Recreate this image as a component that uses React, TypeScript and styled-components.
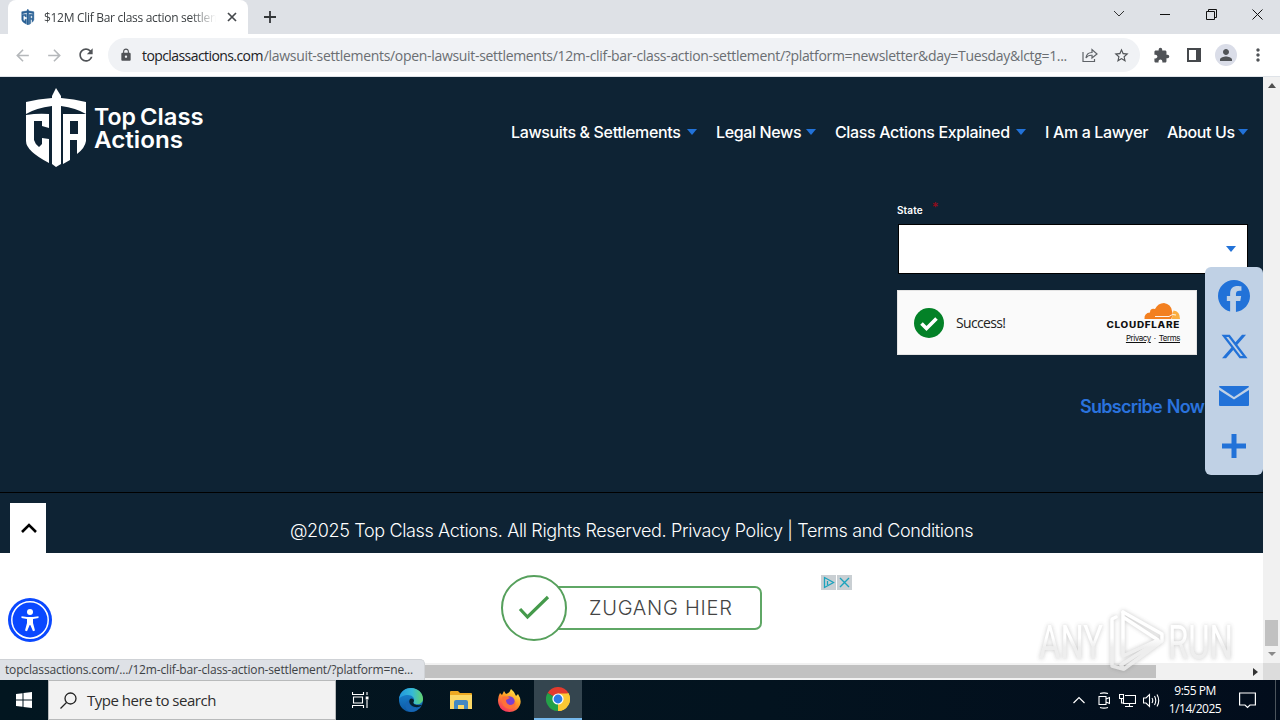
import React from 'react';
import styled, { createGlobalStyle } from 'styled-components';
import { MdLock, MdStarBorder, MdExtension, MdPerson, MdRefresh, MdArrowBack, MdArrowForward, MdMoreVert } from 'react-icons/md';
import { FaFacebook, FaXTwitter } from 'react-icons/fa6';

const ui = `"Open Sans", "Noto Sans", sans-serif`;
const brand = `Inter, Lato, sans-serif`;
const navy = '#0e2334';
const blue = '#2272d8';

const Global = createGlobalStyle`
  * { box-sizing: border-box; }
  html, body { margin: 0; padding: 0; overflow: hidden; }
  body { font-family: ${ui}; }
  svg { display: block; flex: none; }
`;

const Screen = styled.div`
  width: 1280px;
  height: 720px;
  display: flex;
  flex-direction: column;
  overflow: hidden;
  position: relative;
  background: #fff;
`;

const TabStrip = styled.div`
  height: 34px;
  flex: none;
  background: #dee1e6;
  display: flex;
  padding-left: 8px;
`;
const Tab = styled.div`
  width: 240px;
  height: 34px;
  background: #fff;
  border-radius: 8px 8px 0 0;
  display: flex;
  align-items: center;
  padding: 0 4px 0 13px;
`;
const TabTitle = styled.div`
  margin-left: 9px;
  width: 172px;
  margin-right: 4px;
  white-space: nowrap;
  overflow: hidden;
  font-size: 12px;
  letter-spacing: -0.3px;
  color: #3c4043;
  mask-image: linear-gradient(90deg, #000 85%, transparent);
`;
const NewTab = styled.div`
  width: 44px;
  display: flex;
  align-items: center;
  justify-content: center;
`;
const WindowButtons = styled.div`
  margin-left: auto;
  width: 184px;
  height: 28px;
  display: grid;
  grid-template-columns: repeat(4, 46px);
  place-items: center;
`;

const Toolbar = styled.div`
  height: 43px;
  flex: none;
  display: flex;
  align-items: center;
  border-bottom: 1px solid #dfe3e8;
  padding-left: 11px;
  color: #505357;
`;
const ToolIcon = styled.div<{ $w: number; $c?: string }>`
  width: ${p => p.$w}px;
  display: flex;
  justify-content: center;
  color: ${p => p.$c || 'inherit'};
`;
const Omnibox = styled.div`
  width: 1032px;
  height: 34px;
  border-radius: 17px;
  background: #f0f2f5;
  display: flex;
  align-items: center;
  padding-left: 11px;
`;
const Url = styled.div`
  margin-left: 9px;
  flex: 0 0 936px;
  white-space: nowrap;
  font-size: 14px;
  letter-spacing: -0.315px;
  color: #6a6e72;
  b { font-weight: 400; color: #202124; letter-spacing: -0.58px; margin-right: 1px; }
`;
const Avatar = styled.div`
  width: 22px;
  height: 22px;
  border-radius: 50%;
  background: #dadde8;
  display: flex;
  align-items: center;
  justify-content: center;
`;

const Viewport = styled.div`
  height: 603px;
  flex: none;
  display: grid;
  grid-template-columns: 1263px 17px;
  grid-template-rows: 586px 17px;
`;
const Page = styled.div`
  display: flex;
  flex-direction: column;
  overflow: hidden;
  background: #fff;
`;
const Header = styled.header`
  height: 103px;
  flex: none;
  background: ${navy};
  display: flex;
  justify-content: space-between;
  padding: 11px 15px 0 25px;
`;
const Nav = styled.nav`
  display: flex;
  gap: 19px;
  padding-top: 34px;
  height: 54px;
`;
const NavItem = styled.div<{ $w: number }>`
  width: ${p => p.$w}px;
  display: flex;
  align-items: center;
  justify-content: space-between;
  font: 500 16px/20px ${brand};
  letter-spacing: -0.36px;
  color: #fff;
  white-space: nowrap;
`;
const Caret = styled.span`
  flex: none;
  border: 5px solid transparent;
  border-top: 6px solid ${blue};
  border-bottom: 0;
`;
const Body = styled.main`
  height: 312px;
  flex: none;
  background: ${navy};
  display: flex;
  flex-direction: column;
  align-items: flex-start;
  padding: 20px 0 0 897px;
`;
const FieldLabel = styled.label`
  height: 24px;
  display: flex;
  gap: 9px;
  font: 600 10px/20px ${brand};
  color: #fff;
  letter-spacing: 0.1px;
`;
const Required = styled.span`
  color: #8e0d1c;
  font-size: 13px;
  line-height: 14px;
`;
const Select = styled.div`
  width: 350px;
  height: 50px;
  margin-left: 1px;
  background: #fff;
  border: 1px solid #000;
  display: flex;
  align-items: center;
  justify-content: flex-end;
  padding-right: 11px;
`;
const Turnstile = styled.div`
  width: 300px;
  height: 65px;
  margin-top: 16px;
  background: #fafafa;
  border: 1px solid #e4e4e4;
  display: flex;
  align-items: center;
  padding: 0 16px;
`;
const Success = styled.div`
  margin-left: 12px;
  font-size: 14px;
  letter-spacing: -0.65px;
  color: #232323;
`;
const CfBrand = styled.div`
  margin-left: auto;
  display: flex;
  flex-direction: column;
  align-items: flex-end;
`;
const CfLinks = styled.div`
  margin-top: 4px;
  font: 8px/10px ${brand};
  letter-spacing: -0.45px;
  color: #111;
  display: flex;
  gap: 3px;
  u { text-underline-offset: 1px; }
`;
const Subscribe = styled.div`
  margin: 41px 0 0 183px;
  font: 600 18px/22px ${brand};
  letter-spacing: -0.7px;
  word-spacing: 1px;
  color: #2a72dc;
`;
const Footer = styled.footer`
  height: 61px;
  flex: none;
  background: ${navy};
  border-top: 1px solid #000;
  padding: 27px 0 0 290px;
  font: 300 18px/22px ${brand};
  color: #fff;
  white-space: nowrap;
`;
const FooterText = styled.div`
  letter-spacing: -0.362px;
`;
const Ad = styled.div`
  height: 110px;
  display: flex;
  align-items: flex-start;
  padding: 22px 0 0 501px;
`;
const AdCta = styled.div`
  display: flex;
  align-items: center;
  width: 261px;
  height: 66px;
`;
const AdCircle = styled.div`
  width: 66px;
  height: 66px;
  flex: none;
  border-radius: 50%;
  border: 2px solid #56a05c;
  background: #fff;
  z-index: 1;
  display: flex;
  align-items: center;
  justify-content: center;
`;
const AdBox = styled.div`
  width: 204px;
  height: 44px;
  margin-left: -9px;
  border: 2px solid #5fa765;
  border-radius: 0 7px 7px 0;
  display: flex;
  align-items: center;
  padding-left: 29px;
  font: 300 20px/24px ${brand};
  letter-spacing: 0.75px;
  color: #444;
  white-space: nowrap;
`;
const AdChoices = styled.div`
  margin-left: 59px;
  display: flex;
  gap: 1px;
  svg { background: #c9cfd3; }
`;

const VBar = styled.div`
  background: #f1f1f1;
  display: flex;
  flex-direction: column;
  align-items: center;
  padding: 6px 0 7px;
`;
const VThumb = styled.div`
  width: 13px;
  height: 26px;
  margin: auto 0 6px;
  background: #c1c1c1;
`;
const Arrow = styled.span<{ $dir: 'up' | 'down' | 'right'; $c: string }>`
  width: 0;
  height: 0;
  border: 4px solid transparent;
  ${p => p.$dir === 'up' && `border-top: 0; border-bottom: 5px solid ${p.$c};`}
  ${p => p.$dir === 'down' && `border-bottom: 0; border-top: 4px solid ${p.$c};`}
  ${p => p.$dir === 'right' && `border-right: 0; border-left: 5px solid ${p.$c};`}
`;
const HBar = styled.div`
  background: #f1f1f1;
  display: flex;
  align-items: center;
  justify-content: space-between;
  padding-right: 5px;
`;
const HThumb = styled.div`
  width: 1156px;
  height: 13px;
  background: #c1c1c1;
`;
const Corner = styled.div`
  background: #dcdcdc;
`;

const ShareBar = styled.div`
  position: absolute;
  left: 1205px;
  top: 267px;
  width: 58px;
  height: 208px;
  border-radius: 6px;
  background: #c0d1e5;
  color: ${blue};
  display: grid;
  grid-template-rows: repeat(4, 50px);
  place-items: center;
  padding-top: 4px;
`;
const BackToTop = styled.div`
  position: absolute;
  left: 10px;
  top: 503px;
  width: 36px;
  height: 50px;
  background: #fff;
  display: flex;
  align-items: center;
  justify-content: center;
  padding-left: 2px;
`;
const Accessibility = styled.div`
  position: absolute;
  left: 8px;
  top: 598px;
`;
const StatusBubble = styled.div`
  position: absolute;
  left: 0;
  top: 659px;
  width: 425px;
  height: 21px;
  background: #dee1e6;
  border: 1px solid #cfd2d6;
  border-left: 0;
  border-bottom: 0;
  border-radius: 0 5px 0 0;
  padding-left: 5px;
  font-size: 12px;
  line-height: 20px;
  letter-spacing: -0.16px;
  color: #3d4145;
  white-space: nowrap;
`;
const Watermark = styled.div`
  position: absolute;
  left: 1030px;
  top: 600px;
`;

const Taskbar = styled.div`
  height: 40px;
  flex: none;
  background: linear-gradient(90deg, #021620 0%, #03131f 60%, #020d1c 100%);
  display: flex;
  color: #fff;
`;
const TaskCell = styled.div<{ $w: number; $active?: boolean }>`
  width: ${p => p.$w}px;
  height: 40px;
  display: flex;
  align-items: center;
  justify-content: center;
  background: ${p => (p.$active ? '#34454f' : 'transparent')};
  border-bottom: ${p => (p.$active ? '2px solid #76b9ed' : '0')};
`;
const Search = styled.div`
  width: 288px;
  height: 40px;
  background: #f2f2f2;
  border: 1px solid #b8babb;
  display: flex;
  align-items: center;
  padding-left: 11px;
  gap: 10px;
  font-size: 15px;
  letter-spacing: -0.48px;
  color: #2e2e2e;
`;
const Tray = styled.div`
  margin-left: auto;
  display: flex;
  align-items: center;
`;
const Clock = styled.div`
  width: 64px;
  text-align: center;
  font-size: 12px;
  line-height: 18px;
  letter-spacing: -0.5px;
  padding-bottom: 1px;
`;
const ShowDesktop = styled.div`
  width: 5px;
  height: 40px;
  margin-left: 8px;
  border-left: 1px solid #4b545c;
`;

const shieldPath =
  'M30 0L35 8V10Q48 11 60 14V26Q50 20 35 18V76L30 79L26 76V18Q10 20 0 26V14Q12 11 26 10V8Z M0 27Q12 25 23 26V40L16 38V33H8V52Q9 56 13 59L16 56V50L23 51V75Q0 63 0 53Z M37 26H60V53Q59 60 51 66V52H44V72L37 76Z M44 33V46H52V33Z';

function Logo() {
  return (
    <svg width="180" height="80" viewBox="0 0 180 80">
      <g transform="translate(1 0)">
        <path d={shieldPath} fill="#fff" fillRule="evenodd" />
      </g>
      <g fill="#fff" fontFamily={brand} fontWeight="600" fontSize="23.500">
        <text x="69" y="37" textLength="42" lengthAdjust="spacingAndGlyphs">Top</text>
        <text x="115" y="37" textLength="63.500" lengthAdjust="spacingAndGlyphs">Class</text>
        <text x="69" y="60" textLength="89" lengthAdjust="spacingAndGlyphs">Actions</text>
      </g>
    </svg>
  );
}

function Favicon() {
  return (
    <svg width="14" height="16" viewBox="0 0 62 79">
      <path d={shieldPath} fill="#2b6195" stroke="#2b6195" strokeWidth="2" fillRule="evenodd" />
    </svg>
  );
}

function CloudflareMark() {
  return (
    <svg width="75" height="27" viewBox="0 0 75 27">
      <path d="M39.500 17Q39 11 45 10.500Q45 6 50 7Q53 1 59 1Q66 2 67 9Q68.500 13 66 17Z" fill="#f38020" />
      <path d="M66.500 17Q67.500 15 67.500 12L68.500 8.500Q75 9 75 17Z" fill="#faae40" />
      <path d="M50 14.500H64L67.500 12.500L71 13" stroke="#fff" strokeWidth=".9" fill="none" />
      <text x="1.500" y="25.500" fontFamily={brand} fontWeight="800" fontSize="8.600" textLength="73.500" lengthAdjust="spacingAndGlyphs" fill="#111" letterSpacing=".6">CLOUDFLARE</text>
    </svg>
  );
}

function AnyRun() {
  return (
    <svg width="210" height="76" viewBox="0 0 210 76">
      <defs>
        <linearGradient id="wm" x1="0" x2="0" y1="0" y2="76" gradientUnits="userSpaceOnUse">
          <stop offset=".5" stopColor="#fff" />
          <stop offset=".62" stopColor="#ececec" />
        </linearGradient>
      </defs>
      <g style={{ filter: 'drop-shadow(0 0 2px rgba(110,110,110,.45))' }} opacity=".85">
        <g fill="url(#wm)" fontFamily="Roboto, sans-serif" fontSize="49" fontWeight="400">
          <text x="9" y="58.500" textLength="64" lengthAdjust="spacingAndGlyphs">ANY</text>
          <text x="138" y="58.500" textLength="65" lengthAdjust="spacingAndGlyphs">RUN</text>
        </g>
        <g fill="none" stroke="url(#wm)" strokeWidth="3.500" strokeLinejoin="round" strokeLinecap="round">
          <path d="M93 12V56L128 40L93 17" />
          <path d="M93 12L132 34V41L94 69L91 65L128 41" />
          <path d="M86 17L82 19V66L93 69" />
        </g>
      </g>
    </svg>
  );
}

function Edge() {
  return (
    <svg width="26" height="26" viewBox="0 0 26 26">
      <defs>
        <linearGradient id="eg" x1="0" x2="1"><stop offset="0" stopColor="#2196dc" /><stop offset=".55" stopColor="#35b9d8" /><stop offset="1" stopColor="#64d46b" /></linearGradient>
        <linearGradient id="eb" x1="0" x2="0" y1="0" y2="1"><stop offset="0" stopColor="#1c8ad6" /><stop offset="1" stopColor="#0c59a4" /></linearGradient>
      </defs>
      <circle cx="13" cy="13" r="12" fill="url(#eb)" />
      <path d="M1 12C2 4 8 1 13 1C20 1 25 6 25 12C25 16 21 18 17 17C15 16.500 15 15.500 16 14C17 11 14 8 10 8C6 8 2 10 1 12Z" fill="url(#eg)" />
      <path d="M11 13C10 20 17 23 23 19C20 24 14 26 10 24C6 20 7 15 11 13Z" fill="#1666b4" />
      <path d="M12 12C10 15 12 19 17 20C20 20.500 23 19.500 25 17.500C21 19 13 18 16 14C16 12 14 10.500 12 12Z" fill="#06202f" />
    </svg>
  );
}

function Explorer() {
  return (
    <svg width="24" height="22" viewBox="0 0 24 22">
      <path d="M1 3Q1 2 2 2H9L11 4H22Q23 4 23 5V19H1Z" fill="#eda922" />
      <path d="M1 6H23V20H1Z" fill="#fbd866" />
      <path d="M5 20V13Q5 11 7 11H17Q19 11 19 13V20H15V16H9V20Z" fill="#4388c2" />
    </svg>
  );
}

function Firefox() {
  return (
    <svg width="25" height="25" viewBox="0 0 25 25">
      <defs>
        <linearGradient id="ff" x1=".8" x2=".2" y1="0" y2="1"><stop offset="0" stopColor="#fff04a" /><stop offset=".45" stopColor="#ff9a25" /><stop offset="1" stopColor="#f52866" /></linearGradient>
      </defs>
      <path d="M3 5L5 7L7 3L9 6Q12 6 14 1Q18 4 19 8L21 6Q25 12 23 17Q20 24 12.500 24Q4 24 1.500 16Q0 10 3 5Z" fill="url(#ff)" />
      <circle cx="12.500" cy="13.500" r="5.200" fill="#7b3fd1" />
      <path d="M5 9Q9 7 13 10Q11 11 9 12Q9 16 13 17Q17 17 18 13Q20 20 13 21Q6 20 5 14Z" fill="#ff7139" />
    </svg>
  );
}

function Chrome() {
  return (
    <svg width="24" height="24" viewBox="0 0 24 24">
      <path d="M12 12L1.600 6A12 12 0 0 1 22.400 6Z" fill="#e33b2e" />
      <path d="M12 12L22.400 6A12 12 0 0 1 12 24Z" fill="#fcc934" />
      <path d="M12 12L12 24A12 12 0 0 1 1.600 6Z" fill="#24a148" />
      <path d="M12 6.500H22.600A12 12 0 0 1 12 24L16.800 14.700Z" fill="#fcc934" />
      <circle cx="12" cy="12" r="5.600" fill="#fff" />
      <circle cx="12" cy="12" r="4.400" fill="#2c7be5" />
    </svg>
  );
}

const navItems = [
  { label: 'Lawsuits & Settlements', w: 186, caret: true },
  { label: 'Legal News', w: 100, caret: true },
  { label: 'Class Actions Explained', w: 191, caret: true },
  { label: 'I Am a Lawyer', w: 103, caret: false },
  { label: 'About Us', w: 81, caret: true },
];

export default function App() {
  return (
    <Screen>
      <Global />
      <TabStrip>
        <Tab>
          <Favicon />
          <TabTitle>$12M Clif Bar class action settlement</TabTitle>
          <svg width="24" height="12" viewBox="0 0 24 12" stroke="#45484c" strokeWidth="1.7"><path d="M8 2L16 10M16 2L8 10" /></svg>
        </Tab>
        <NewTab>
          <svg width="12" height="12" viewBox="0 0 12 12" stroke="#333639" strokeWidth="1.8"><path d="M6 0V12M0 6H12" /></svg>
        </NewTab>
        <WindowButtons>
          <svg width="12" height="8" viewBox="0 0 12 8" fill="none" stroke="#333"><path d="M1 1L6 6L11 1" /></svg>
          <svg width="10" height="10" viewBox="0 0 10 10" stroke="#111"><path d="M0 5.500H10" /></svg>
          <svg width="11" height="11" viewBox="0 0 11 11" fill="none" stroke="#111"><path d="M.5 2.500H8.500V10.500H.5ZM2.500 2.500V.5H10.500V8.500H8.500" /></svg>
          <svg width="11" height="11" viewBox="0 0 11 11" stroke="#111"><path d="M.5.5L10.500 10.500M10.500.5L.5 10.500" /></svg>
        </WindowButtons>
      </TabStrip>
      <Toolbar>
        <ToolIcon $w={22} $c="#b5b8bb"><MdArrowBack size={19} /></ToolIcon>
        <ToolIcon $w={42} $c="#b5b8bb"><MdArrowForward size={19} /></ToolIcon>
        <ToolIcon $w={22}><MdRefresh size={20} /></ToolIcon>
        <ToolIcon $w={11} />
        <Omnibox>
          <MdLock size={14} />
          <Url><b>topclassactions.com</b>/lawsuit-settlements/open-lawsuit-settlements/12m-clif-bar-class-action-settlement/?platform=newsletter&amp;day=Tuesday&amp;lctg=1...</Url>
          <ToolIcon $w={24}>
            <svg width="16" height="15" viewBox="0 0 16 15" fill="none" stroke="#5f6368" strokeWidth="1.2"><path d="M1 4V13.500H12.500V11M4 10Q4.500 4.500 10 4.500V1.500L15 6L10 10V7.300Q6 7 4 10Z" /></svg>
          </ToolIcon>
          <ToolIcon $w={38}><MdStarBorder size={17} /></ToolIcon>
        </Omnibox>
        <ToolIcon $w={43}><MdExtension size={17} /></ToolIcon>
        <ToolIcon $w={22}>
          <svg width="14" height="14" viewBox="0 0 14 14"><path d="M0 0H14V14H0ZM2 2V12H9V2Z" fill="#45484c" fillRule="evenodd" /></svg>
        </ToolIcon>
        <ToolIcon $w={42}><Avatar><MdPerson size={18} /></Avatar></ToolIcon>
        <ToolIcon $w={22}><MdMoreVert size={20} /></ToolIcon>
      </Toolbar>
      <Viewport>
        <Page>
          <Header>
            <Logo />
            <Nav>
              {navItems.map(n => (
                <NavItem key={n.label} $w={n.w}>{n.label}{n.caret && <Caret />}</NavItem>
              ))}
            </Nav>
          </Header>
          <Body>
            <FieldLabel>State<Required>*</Required></FieldLabel>
            <Select><Caret /></Select>
            <Turnstile>
              <svg width="30" height="30" viewBox="0 0 30 30"><circle cx="15" cy="15" r="15" fill="#038127" /><path d="M7.500 15.500L12.500 20.500L22.500 10.500" fill="none" stroke="#fff" strokeWidth="3.600" /></svg>
              <Success>Success!</Success>
              <CfBrand>
                <CloudflareMark />
                <CfLinks><u>Privacy</u><span>·</span><u>Terms</u></CfLinks>
              </CfBrand>
            </Turnstile>
            <Subscribe>Subscribe Now</Subscribe>
          </Body>
          <Footer>
            <FooterText>@2025 Top Class Actions. All Rights Reserved. Privacy Policy | Terms and Conditions</FooterText>
          </Footer>
          <Ad>
            <AdCta>
              <AdCircle>
                <svg width="32" height="26" viewBox="0 0 32 26" fill="none" stroke="#459a4b" strokeWidth="3.200"><path d="M2 14L9.500 22L30 2" /></svg>
              </AdCircle>
              <AdBox>ZUGANG HIER</AdBox>
            </AdCta>
            <AdChoices>
              <svg width="15" height="15" viewBox="0 0 15 15" fill="none" stroke="#1ba3bd" strokeWidth="1.300"><path d="M3.500 2.500V12.500L12.500 7.500ZM6.500 6V10" /></svg>
              <svg width="15" height="15" viewBox="0 0 15 15" stroke="#1ba3bd" strokeWidth="1.400"><path d="M3 3L12 12M12 3L3 12" /></svg>
            </AdChoices>
          </Ad>
        </Page>
        <VBar>
          <Arrow $dir="up" $c="#505050" />
          <VThumb />
          <Arrow $dir="down" $c="#8a8a8a" />
        </VBar>
        <HBar><HThumb /><Arrow $dir="right" $c="#333" /></HBar>
        <Corner />
      </Viewport>
      <Taskbar>
        <TaskCell $w={48}>
          <svg width="16" height="16" viewBox="0 0 16 16" fill="#fff"><path d="M0 2L6.500 1.200V7.500H0ZM7.500 1L16 0V7.500H7.500ZM0 8.500H6.500V14.800L0 14ZM7.500 8.500H16V16L7.500 15Z" /></svg>
        </TaskCell>
        <Search>
          <svg width="17" height="17" viewBox="0 0 17 17" fill="none" stroke="#222" strokeWidth="1.300"><circle cx="10.500" cy="6.500" r="5.500" /><path d="M6.500 10.500L.5 16.500" /></svg>
          Type here to search
        </Search>
        <TaskCell $w={48}>
          <svg width="17" height="16" viewBox="0 0 17 16" fill="none" stroke="#fff" strokeWidth="1.100"><path d="M.5 0V2.500H11.500V0M1.500 5H10.500V11H1.500ZM.5 16V13.500H11.500V16M15 0V3M15 8V16" /><path d="M13.700 4.500H16.500V7.500H13.700Z" fill="#fff" stroke="none" /></svg>
        </TaskCell>
        <TaskCell $w={54}><Edge /></TaskCell>
        <TaskCell $w={46}><Explorer /></TaskCell>
        <TaskCell $w={50}><Firefox /></TaskCell>
        <TaskCell $w={48} $active><Chrome /></TaskCell>
        <Tray>
          <TaskCell $w={26}><svg width="12" height="8" viewBox="0 0 12 8" fill="none" stroke="#fff" strokeWidth="1.200"><path d="M.5 7L6 1.500L11.500 7" /></svg></TaskCell>
          <TaskCell $w={23}><svg width="12" height="17" viewBox="0 0 12 17" fill="none" stroke="#fff" strokeWidth="1.100"><path d="M1 4.500H8V12.500H1ZM8 7L11.500 5.500V11.500L8 10M2 1.500Q6 .2 10 1.500M2 15.500Q6 16.800 10 15.500" /></svg></TaskCell>
          <TaskCell $w={24}><svg width="17" height="15" viewBox="0 0 17 15" fill="none" stroke="#fff" strokeWidth="1.100"><path d="M6 2.500H16.500V10.500H4.500V6M10.500 10.500V13.500M6 13.500H14M.5 1.500H4.500V5.500H.5ZM2.500 5.500V10H4.500" /></svg></TaskCell>
          <TaskCell $w={24}><svg width="17" height="15" viewBox="0 0 17 15" fill="none" stroke="#fff" strokeWidth="1.100"><path d="M.5 5H3L6.500 1.500V13.500L3 10H.5ZM9 5Q10.500 7.500 9 10M11.500 3Q14 7.500 11.500 12M14 1.500Q17.500 7.500 14 13.500" /></svg></TaskCell>
          <Clock>9:55 PM<br />1/14/2025</Clock>
          <TaskCell $w={40}><svg width="17" height="17" viewBox="0 0 17 17" fill="none" stroke="#fff" strokeWidth="1.200"><path d="M.6 1H16.400V13H11L8.500 15.500L6 13H.6Z" /></svg></TaskCell>
          <ShowDesktop />
        </Tray>
      </Taskbar>

      <ShareBar>
        <FaFacebook size={32} />
        <FaXTwitter size={29} />
        <svg width="30" height="20" viewBox="0 0 30 20" fill={blue}><path d="M0 1Q0 0 1 0H29Q30 0 30 1L15 11ZM0 4L15 13.500L30 4V19Q30 20 29 20H1Q0 20 0 19Z" /></svg>
        <svg width="24" height="24" viewBox="0 0 24 24" fill={blue}><path d="M9.500 0H14.500V9.500H24V14.500H14.500V24H9.500V14.500H0V9.500H9.500Z" /></svg>
      </ShareBar>
      <BackToTop>
        <svg width="16" height="10" viewBox="0 0 16 10" fill="none" stroke="#000" strokeWidth="2.600"><path d="M1 9L8 2L15 9" /></svg>
      </BackToTop>
      <Accessibility>
        <svg width="44" height="44" viewBox="0 0 44 44">
          <circle cx="22" cy="22" r="22" fill="#0a48ff" />
          <circle cx="22" cy="22" r="18.200" fill="none" stroke="#fff" strokeWidth="1.500" />
          <circle cx="22" cy="14" r="3" fill="#fff" />
          <path d="M13.500 18.200L19 19H25L30.500 18.200V20L25 21V25L27 32.500L25 33.200L22.300 27H21.700L19 33.200L17 32.500L19 25V21L13.500 20Z" fill="#fff" />
        </svg>
      </Accessibility>
      <StatusBubble>topclassactions.com/.../12m-clif-bar-class-action-settlement/?platform=ne...</StatusBubble>
      <Watermark><AnyRun /></Watermark>
    </Screen>
  );
}
